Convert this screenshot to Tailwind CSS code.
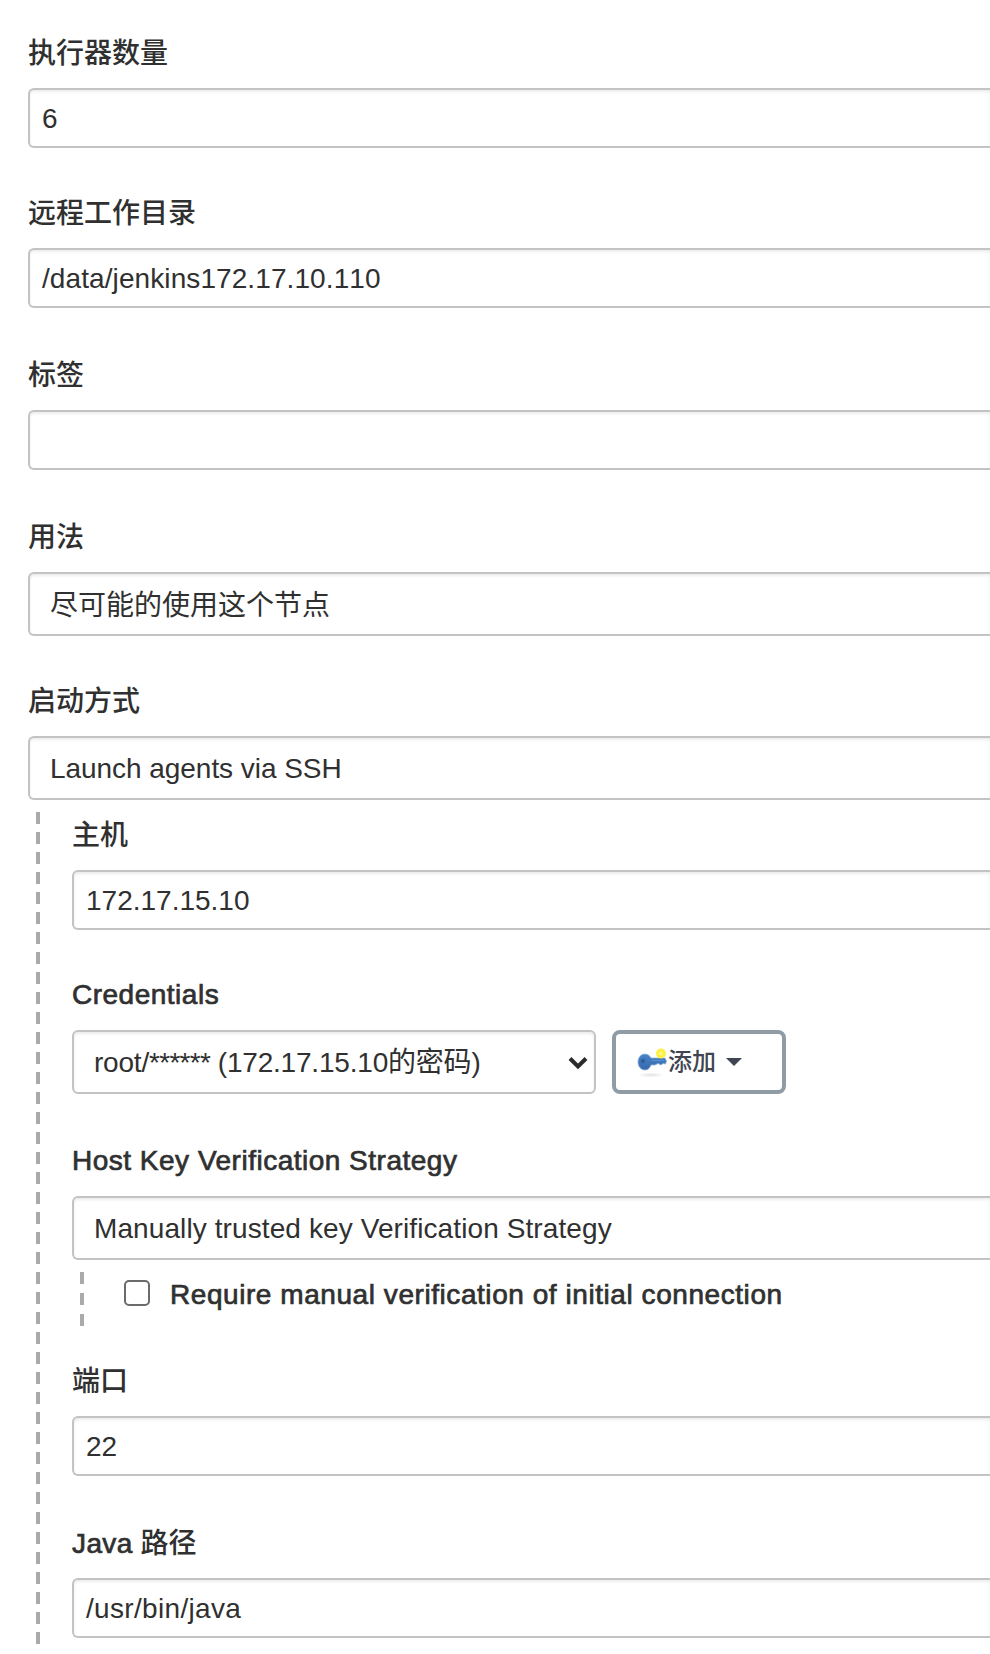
<!DOCTYPE html>
<html lang="zh-CN">
<head>
    <meta charset="UTF-8">
    <meta name="viewport" content="width=device-width, initial-scale=1.0">
    <title>Jenkins</title>
    <script src="https://cdn.jsdelivr.net/npm/@tailwindcss/browser@4"></script>
</head>
<body class="bg-white font-['Liberation_Sans','Noto_Sans_CJK_SC',sans-serif] text-[28px] leading-10 text-[#303030]">
    <form class="pl-7 pt-8 h-[1654px] overflow-hidden">
        <!-- 执行器数量 -->
        <div class="mb-11">
            <label class="block h-10 pt-0.5 mb-4 whitespace-nowrap font-medium">执行器数量</label>
            <div class="h-15 flex items-center border-2 border-r-0 border-[#c3c3c3] rounded-l-md px-3 pt-0.5 shadow-[inset_0_2px_3px_rgba(0,0,0,0.08)]"><span>6</span></div>
        </div>

        <!-- 远程工作目录 -->
        <div class="mb-[46px]">
            <label class="block h-10 pt-0.5 mb-4 whitespace-nowrap font-medium">远程工作目录</label>
            <div class="h-15 flex items-center border-2 border-r-0 border-[#c3c3c3] rounded-l-md px-3 pt-0.5 shadow-[inset_0_2px_3px_rgba(0,0,0,0.08)]"><span class="tracking-[0.09px] [font-kerning:none]">/data/jenkins172.17.10.110</span></div>
        </div>

        <!-- 标签 -->
        <div class="mb-[46px]">
            <label class="block h-10 pt-0.5 mb-4 whitespace-nowrap font-medium">标签</label>
            <div class="h-15 border-2 border-r-0 border-[#c3c3c3] rounded-l-md shadow-[inset_0_2px_3px_rgba(0,0,0,0.08)]"></div>
        </div>

        <!-- 用法 -->
        <div class="mb-11">
            <label class="block h-10 pt-0.5 mb-4 whitespace-nowrap font-medium">用法</label>
            <div class="h-16 flex items-center border-2 border-r-0 border-[#c3c3c3] rounded-l-md px-5 pt-[3px] shadow-[inset_0_2px_3px_rgba(0,0,0,0.08)]"><span>尽可能的使用这个节点</span></div>
        </div>

        <!-- 启动方式 -->
        <div class="mb-3">
            <label class="block h-10 pt-0.5 mb-4 whitespace-nowrap font-medium">启动方式</label>
            <div class="h-16 flex items-center border-2 border-r-0 border-[#c3c3c3] rounded-l-md px-5 pt-0.5 shadow-[inset_0_2px_3px_rgba(0,0,0,0.08)]"><span class="tracking-[-0.05px]">Launch agents via SSH</span></div>
        </div>

        <!-- SSH -->
        <div class="flex pl-2">
            <div class="w-1 h-[832px] shrink-0 bg-[repeating-linear-gradient(to_bottom,#aaa_0,#aaa_12px,transparent_12px,transparent_20px)]"></div>
            <div class="grow pl-8 pt-0.5">
                <div class="mb-11">
                    <label class="block h-10 pt-0.5 mb-4 whitespace-nowrap font-medium">主机</label>
                    <div class="h-15 flex items-center border-2 border-r-0 border-[#c3c3c3] rounded-l-md px-3 pt-0.5 shadow-[inset_0_2px_3px_rgba(0,0,0,0.08)]"><span>172.17.15.10</span></div>
                </div>

                <div class="mb-[46px]">
                    <label class="block h-10 pt-px mb-4 whitespace-nowrap font-medium tracking-[0.5px] [-webkit-text-stroke:0.7px_#303030]">Credentials</label>
                    <div class="flex gap-4">
                        <div class="w-[524px] h-16 flex items-center justify-between border-2 border-[#c3c3c3] rounded-md pl-5 pr-1.5 shadow-[inset_0_2px_3px_rgba(0,0,0,0.08)]">
                            <span class="pt-0.5 whitespace-nowrap tracking-[-0.2px]">root/<span class="tracking-[-0.7px]">******</span> (172.17.15.10的密码)</span>
                            <svg class="w-5 h-4" viewBox="0 0 20 16" fill="none" stroke="#2b2b2b" stroke-width="4">
                                <path d="M2 4.5 L10 12.5 L18 4.5" />
                            </svg>
                        </div>
                        <button type="button" class="w-[174px] h-16 flex items-center border-4 border-[#8f9ba5] rounded-lg pl-[21px] text-2xl font-medium text-[#3f4651]">
                            <svg class="w-[31px] h-8" viewBox="0 0 31 32">
                                <defs>
                                    <radialGradient id="shade"><stop offset="0" stop-color="#aaa" stop-opacity=".35" /><stop offset="1" stop-color="#aaa" stop-opacity="0" /></radialGradient>
                                    <linearGradient id="key" x1="0" y1="0" x2="0" y2="1"><stop offset="0" stop-color="#4a83c6" /><stop offset="1" stop-color="#3568ad" /></linearGradient>
                                </defs>
                                <ellipse cx="14" cy="29" rx="13" ry="2.5" fill="url(#shade)" />
                                <path d="M8 8 C11 8 13 10 14 12 H28 L29.5 15 L28.5 18 L26 17.5 L24 19 L21 17.5 L18 19 H14 C13 22 11 24 8 24 C4 24 1 20.500 1 16 C1 11.500 4 8 8 8 Z" fill="url(#key)" stroke="#8fb3dd" stroke-width=".8" />
                                <circle cx="6" cy="15" r="2.200" fill="#2f5f9c" />
                                <path d="M15 14.500 H27" stroke="#5f8fcb" />
                                <circle cx="24" cy="7.500" r="5" fill="#fff13f" />
                                <circle cx="24" cy="7.500" r="2" fill="#fff98a" />
                            </svg>
                            <span>添加</span>
                            <svg class="w-4 h-2 ml-2.5" viewBox="0 0 16 8"><path d="M0 0 H16 L8 8 Z" fill="#3f4651" /></svg>
                        </button>
                    </div>
                </div>

                <div class="mb-3">
                    <label class="block h-10 pt-px mb-4 whitespace-nowrap font-medium tracking-[0.5px] [-webkit-text-stroke:0.7px_#303030]">Host Key Verification Strategy</label>
                    <div class="h-16 flex items-center border-2 border-r-0 border-[#c3c3c3] rounded-l-md px-5 pt-0.5 shadow-[inset_0_2px_3px_rgba(0,0,0,0.08)]"><span class="tracking-[0.1px]">Manually trusted key Verification Strategy</span></div>
                </div>

                <!-- 验证选项 -->
                <div class="flex pl-2 mb-[34px]">
                    <div class="w-1 h-[54px] shrink-0 bg-[repeating-linear-gradient(to_bottom,#aaa_0,#aaa_12px,transparent_12px,transparent_21px)]"></div>
                    <div class="flex items-start pl-10 pt-0.5">
                        <span class="w-[26px] h-[26px] mt-1.5 mr-5 border-2 border-[#6b6b6b] rounded-[5px]"></span>
                        <label class="pt-px whitespace-nowrap font-medium tracking-[0.56px] [-webkit-text-stroke:0.7px_#303030]">Require manual verification of initial connection</label>
                    </div>
                </div>

                <div class="mb-[46px]">
                    <label class="block h-10 pt-0.5 mb-4 whitespace-nowrap font-medium">端口</label>
                    <div class="h-15 flex items-center border-2 border-r-0 border-[#c3c3c3] rounded-l-md px-3 pt-0.5 shadow-[inset_0_2px_3px_rgba(0,0,0,0.08)]"><span>22</span></div>
                </div>

                <div>
                    <label class="block h-10 pt-0.5 mb-4 whitespace-nowrap font-medium"><span class="tracking-[0.4px] [-webkit-text-stroke:0.7px_#303030]">Java</span> 路径</label>
                    <div class="h-15 flex items-center border-2 border-r-0 border-[#c3c3c3] rounded-l-md px-3 pt-0.5 shadow-[inset_0_2px_3px_rgba(0,0,0,0.08)]"><span class="tracking-[0.32px]">/usr/bin/java</span></div>
                </div>
            </div>
        </div>
    </form>
</body>
</html>
